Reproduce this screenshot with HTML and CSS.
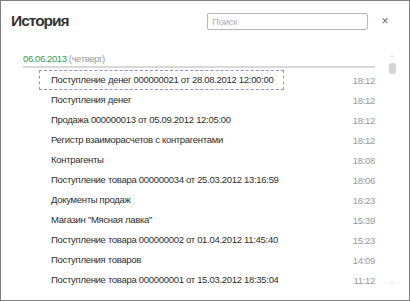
FILE: index.html
```html
<!DOCTYPE html>
<html lang="ru">
<head>
<meta charset="utf-8">
<link rel="stylesheet" href="styles.css">
</head>
<body>
<div class="window">
  <header class="head">
    <h1 class="title">История</h1>
    <input class="search" type="text" placeholder="Поиск">
    <button class="close" type="button">×</button>
  </header>
  <div class="main">
    <div class="list">
      <div class="date"><span class="day">06.06.2013</span> <span class="weekday">(четверг)</span></div>
      <ul class="rows">
        <li class="row"><span class="name focus">Поступление денег 000000021 от 28.08.2012 12:00:00</span><span class="time">18:12</span></li>
        <li class="row"><span class="name">Поступления денег</span><span class="time">18:12</span></li>
        <li class="row"><span class="name">Продажа 000000013 от 05.09.2012 12:05:00</span><span class="time">18:12</span></li>
        <li class="row"><span class="name">Регистр взаиморасчетов с контрагентами</span><span class="time">18:12</span></li>
        <li class="row"><span class="name">Контрагенты</span><span class="time">18:08</span></li>
        <li class="row"><span class="name">Поступление товара 000000034 от 25.03.2012 13:16:59</span><span class="time">18:06</span></li>
        <li class="row"><span class="name">Документы продаж</span><span class="time">16:23</span></li>
        <li class="row"><span class="name">Магазин "Мясная лавка"</span><span class="time">15:39</span></li>
        <li class="row"><span class="name">Поступление товара 000000002 от 01.04.2012 11:45:40</span><span class="time">15:23</span></li>
        <li class="row"><span class="name">Поступления товаров</span><span class="time">14:09</span></li>
        <li class="row"><span class="name">Поступление товара 000000001 от 15.03.2012 18:35:04</span><span class="time">11:12</span></li>
      </ul>
    </div>
    <div class="scrollbar">
      <span class="arrow up"></span>
      <span class="thumb"></span>
      <span class="track"></span>
      <span class="arrow down"></span>
    </div>
  </div>
</div>
</body>
</html>
```

FILE: styles.css
```css
* { box-sizing: border-box; }
html, body { margin: 0; padding: 0; background: #fff; }
body { font-family: "Liberation Sans", Arial, sans-serif; color: #2e2e2e; }

.window {
  width: 410px;
  height: 301px;
  border: 1px solid #7f7f7f;
  background: #fff;
  display: flex;
  flex-direction: column;
  overflow: hidden;
}

.head {
  display: flex;
  align-items: center;
  height: 40px;
  padding: 0 0 0 10px;
}
.title {
  margin: 0;
  font-size: 15.5px;
  letter-spacing: -1px;
  font-weight: bold;
  color: #353535;
  flex: 1;
}
.search {
  width: 161px;
  height: 17px;
  border: 1px solid #b8b8b8;
  border-radius: 2px;
  padding: 0 4px;
  font-family: inherit;
  font-size: 9.5px;
  letter-spacing: -0.2px;
  color: #333;
  outline: none;
  margin-right: 12px;
}
.search::placeholder { color: #b0b0b0; }
.close {
  border: 0;
  background: none;
  padding: 0;
  width: 10px;
  font-family: inherit;
  font-size: 12px;
  color: #666;
  margin-right: 19px;
  line-height: 1;
}

.main {
  flex: 1;
  display: flex;
  padding: 11px 0 0 22px;
}
.list { flex: 1; }
.date {
  font-size: 9.5px;
  letter-spacing: -0.4px;
  line-height: 13px;
  padding-bottom: 1px;
  border-bottom: 2px solid #d8d8d8;
}
.day { color: #2f9e5a; }
.weekday { color: #9a9a9a; }

.rows {
  list-style: none;
  margin: 2px 0 0;
  padding: 0 0 0 16px;
}
.row {
  display: flex;
  align-items: center;
  justify-content: space-between;
  height: 20px;
  font-size: 9.5px;
  letter-spacing: -0.3px;
}
.name {
  height: 20px;
  line-height: 18px;
  padding: 0 10px 0 11px;
  border: 1px solid transparent;
}
.name.focus { border: 1px dashed #8a94d6; }
.time { color: #999; }

.scrollbar {
  width: 34px;
  display: flex;
  flex-direction: column;
  align-items: center;
}
.arrow {
  width: 0; height: 0;
  border-left: 2px solid transparent;
  border-right: 2px solid transparent;
}
.arrow.up { border-bottom: 2px solid #e0e0e0; margin-top: 3px; }
.arrow.down { border-top: 2px solid #e0e0e0; margin-bottom: 16px; }
.thumb {
  width: 7px;
  height: 11px;
  border-radius: 3px;
  background: #d4d4d4;
  margin-top: 6px;
}
.track { flex: 1; }
```
